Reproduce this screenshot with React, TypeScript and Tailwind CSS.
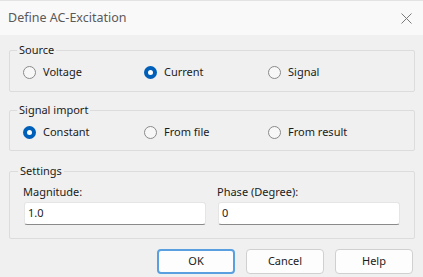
import React from "react";

const FONT = "font-['Segoe_UI','Noto_Sans',sans-serif]";

function Radio({ label, checked, width }: { label: string; checked?: boolean; width: string }) {
  return (
    <label className={`flex h-[18px] items-center gap-[7px] ${width}`}>
      {checked ? (
        <span className="flex h-[13px] w-[13px] items-center justify-center rounded-full bg-[#005fb8]">
          <span className="h-[5px] w-[5px] rounded-full bg-white" />
        </span>
      ) : (
        <span className="h-[13px] w-[13px] rounded-full border border-[#8a8a8a] bg-[#f7f7f7]" />
      )}
      <span className="text-[11px] text-[#1b1b1b]">{label}</span>
    </label>
  );
}

function Group({
  title,
  children,
  className,
}: {
  title: string;
  children: React.ReactNode;
  className?: string;
}) {
  return (
    <fieldset className={`mx-[9px] mr-[8px] rounded-[2px] border border-[#dcdcdc] ${className ?? ""}`}>
      <legend className="ml-[-6px] px-[2px] text-[11px] leading-[14px] text-[#1b1b1b]">{title}</legend>
      {children}
    </fieldset>
  );
}

function Field({ label, value }: { label: string; value: string }) {
  return (
    <div className="flex flex-col">
      <span className="ml-[-1px] h-[14px] text-[11px] leading-[14px] text-[#1b1b1b]">{label}</span>
      <div className="mt-[3px] flex h-[23px] items-center rounded-[3px] border border-[#e5e5e5] border-b-[#8a8a8a] bg-white px-[3px] text-[11px] text-[#1b1b1b]">
        {value}
      </div>
    </div>
  );
}

function Button({ label, primary }: { label: string; primary?: boolean }) {
  return (
    <button
      className={`h-[25px] w-[78px] rounded-[4px] bg-[#fdfdfd] text-[11px] text-[#1b1b1b] ${
        primary ? "border-2 border-[#5aa0e0]" : "border border-[#d0d0d0]"
      }`}
    >
      {label}
    </button>
  );
}

export default function App() {
  return (
    <div className={`flex h-[277px] w-[423px] flex-col overflow-hidden bg-[#f0f0f0] ${FONT}`}>
      <div className="flex h-[35px] shrink-0 items-center justify-between border-t border-[#e3e3e3] bg-[#f9f9f9] pl-[8px] pr-[10px]">
        <span className="text-[12.5px] text-[#5a5a5a]">Define AC-Excitation</span>
        <svg width="11" height="11" viewBox="0 0 11 11" className="mr-[1px]">
          <path d="M0.5 0.5 L10.5 10.5 M10.5 0.5 L0.5 10.5" stroke="#7a7a7a" strokeWidth="1" />
        </svg>
      </div>

      <div className="flex flex-col pt-[8px]">
        <Group title="Source" className="pl-[13px] pt-[6px] pb-[10px]">
          <div className="flex">
            <Radio label="Voltage" width="w-[121px]" />
            <Radio label="Current" checked width="w-[124px]" />
            <Radio label="Signal" width="w-[120px]" />
          </div>
        </Group>

        <Group title="Signal import" className="mt-[11px] pl-[13px] pt-[6px] pb-[9px]">
          <div className="flex">
            <Radio label="Constant" checked width="w-[121px]" />
            <Radio label="From file" width="w-[124px]" />
            <Radio label="From result" width="w-[120px]" />
          </div>
        </Group>

        <Group title="Settings" className="mt-[13px] px-[14px] pt-[7px] pb-[13px]">
          <div className="grid grid-cols-2 gap-x-[12px]">
            <Field label="Magnitude:" value="1.0" />
            <Field label="Phase (Degree):" value="0" />
          </div>
        </Group>

        <div className="mt-[10px] flex justify-end gap-[11px] pr-[10px]">
          <Button label="OK" primary />
          <Button label="Cancel" />
          <Button label="Help" />
        </div>
      </div>
    </div>
  );
}
